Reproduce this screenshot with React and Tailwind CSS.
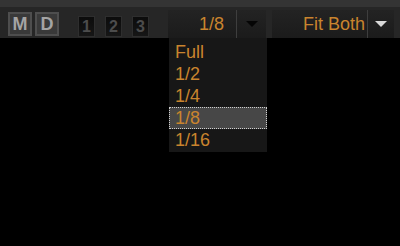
import React from "react";

function Caret({ color }) {
    return (
        <svg width="12" height="6" viewBox="0 0 12 6">
            <path d="M0 0 L12 0 L6 6 Z" fill={color} />
        </svg>
    );
}

export default function App() {
    const sizes = ["Full", "1/2", "1/4", "1/8", "1/16"];
    const selected = "1/8";

    return (
        <div className="relative w-[400px] h-[246px] bg-black overflow-hidden font-['Liberation_Sans',Arial,sans-serif]">
            <div className="h-[7px] bg-[#343434]" />
            <div className="flex items-start h-[31px] bg-[#262626]">
                {/* view mode */}
                <div className="flex gap-[3px] ml-[8px] mt-[5px]">
                    {["M", "D"].map((l) => (
                        <div
                            key={l}
                            className="w-[24px] h-[24px] flex items-center justify-center border-2 border-[#4e4e4e] bg-[#393939] text-[#a4a4a4] text-[18px] font-bold leading-none"
                        >
                            {l}
                        </div>
                    ))}
                </div>
                {/* layouts */}
                <div className="flex gap-[10px] ml-[19px] mt-[9px]">
                    {["1", "2", "3"].map((n) => (
                        <div
                            key={n}
                            className="w-[17px] h-[21px] flex items-center justify-center border border-[#2e2e2e] bg-gradient-to-b from-[#0c0c0c] to-[#161616] text-[#4c4c4c] text-[16px] font-bold leading-none"
                        >
                            {n}
                        </div>
                    ))}
                </div>
                {/* resolution */}
                <div className="relative ml-[19px] mt-[3px] flex h-[28px] w-[98px] bg-gradient-to-b from-[#232323] to-[#1b1b1b]">
                    <div className="flex-1 flex items-center justify-end pr-[12px] text-[18px] text-[#c9842e] leading-none">
                        {selected}
                    </div>
                    <div className="w-[30px] border-l border-[#3e3e3e] flex items-center justify-center">
                        <Caret color="#050505" />
                    </div>
                </div>
                {/* fit */}
                <div className="ml-[6px] mt-[3px] flex h-[28px] w-[122px] bg-gradient-to-b from-[#232323] to-[#1b1b1b]">
                    <div className="flex-1 flex items-center justify-end pr-[2px] text-[18px] text-[#c9842e] leading-none">
                        Fit Both
                    </div>
                    <div className="w-[27px] border-l border-[#3e3e3e] flex items-center justify-center">
                        <Caret color="#d8d8d8" />
                    </div>
                </div>
            </div>

            {/* dropdown list */}
            <div className="absolute left-[169px] top-[38px] w-[98px] h-[114px] bg-[#171717] pt-[3px]">
                {sizes.map((s) => (
                    <div
                        key={s}
                        className={`h-[22px] flex items-center pl-[5px] text-[18px] text-[#c9842e] leading-none ${
                            s === selected
                                ? "bg-[#474747] border border-dotted border-[#cfcfcf]"
                                : "border border-transparent"
                        }`}
                    >
                        {s}
                    </div>
                ))}
            </div>
        </div>
    );
}
